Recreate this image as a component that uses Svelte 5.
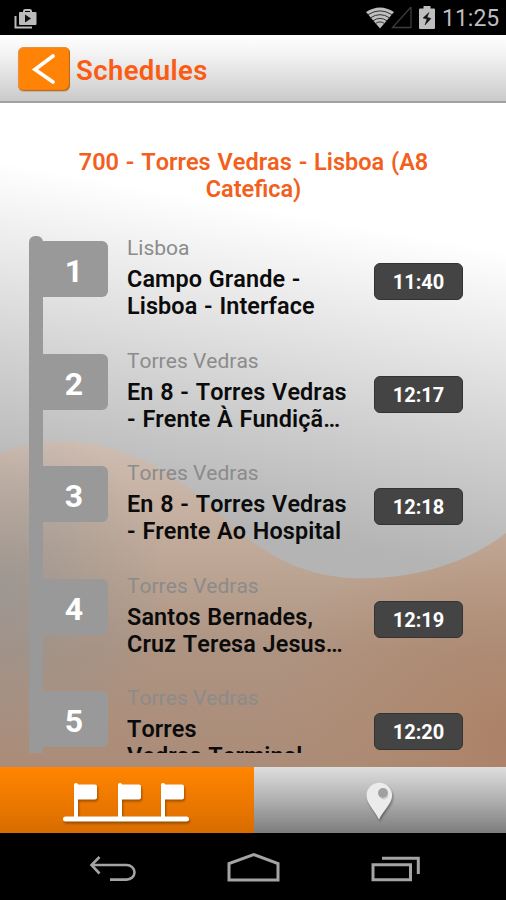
<script lang="ts">
  const stops = [
    { city: 'Lisboa', lines: ['Campo Grande -', 'Lisboa - Interface'], time: '11:40' },
    { city: 'Torres Vedras', lines: ['En 8 - Torres Vedras', '- Frente À Fundiçã…'], time: '12:17' },
    { city: 'Torres Vedras', lines: ['En 8 - Torres Vedras', '- Frente Ao Hospital'], time: '12:18' },
    { city: 'Torres Vedras', lines: ['Santos Bernades,', 'Cruz Teresa Jesus…'], time: '12:19' },
    { city: 'Torres Vedras', lines: ['Torres', 'Vedras Terminal'], time: '12:20' },
  ];
</script>

<div class="phone">
  <div class="status-bar">
    <svg class="store" width="24" height="22" viewBox="0 0 24 22">
      <path d="M1.5 8v11.5H18" fill="none" stroke="#bcbcbc" stroke-width="2" />
      <path d="M10 5V3.2Q10 2 11.2 2h4.6Q17 2 17 3.2V5" fill="none" stroke="#bcbcbc" stroke-width="2" />
      <rect x="5" y="4" width="17.5" height="13" rx="1" fill="#bcbcbc" />
      <path d="M11 6.5v8l6-4z" fill="#111" />
    </svg>
    <div class="status-icons">
      <svg width="28" height="22" viewBox="0 0 28 22">
        <path d="M0 5Q14-4 28 5L14 21.5z" fill="#bebebe" />
        <path d="M2 7.7Q14 0 26 7.7M4.5 10.8Q14 4.5 23.5 10.8M7 13.8Q14 9 21 13.8M9.5 16.5Q14 13.3 18.5 16.5" fill="none" stroke="#333" stroke-width="1" />
      </svg>
      <svg class="signal" width="21" height="22" viewBox="0 0 21 22">
        <path d="M1.5 20.5H20V0z" fill="none" stroke="#3c3c3c" stroke-width="1.3" />
      </svg>
      <svg class="battery" width="16" height="23" viewBox="0 0 16 23">
        <path d="M4.5 0h7v2.500H15q1 0 1 1V22q0 1-1 1H1q-1 0-1-1V3.500q0-1 1-1h3.500z" fill="#bebebe" />
        <path d="M10 6.5L4 12l4 1L6 19 12 12.500l-4-1.300z" fill="#111" stroke="#111" stroke-width=".5" />
      </svg>
      <span class="clock">11:25</span>
    </div>
  </div>

  <header class="app-bar">
    <button class="back" aria-label="Back">
      <svg width="52" height="44" viewBox="0 0 52 44">
        <path d="M35 9L17 22.5l18 12.5" fill="none" stroke="#fff" stroke-width="3.7" stroke-linecap="round" />
      </svg>
    </button>
    <h1>Schedules</h1>
  </header>

  <main>
    <svg class="backdrop" width="506" height="665" viewBox="0 102 506 665" preserveAspectRatio="none">
      <defs>
        <linearGradient id="sky" gradientUnits="userSpaceOnUse" x1="250" y1="205" x2="194" y2="519">
          <stop offset="0" stop-color="#fff" />
          <stop offset=".3" stop-color="#e8e8e8" />
          <stop offset=".62" stop-color="#cfcfcf" />
          <stop offset=".9" stop-color="#bbb" />
          <stop offset="1" stop-color="#b4b4b4" />
        </linearGradient>
        <linearGradient id="sand" gradientUnits="userSpaceOnUse" x1="0" y1="440" x2="0" y2="767">
          <stop offset="0" stop-color="#cfbdb2" />
          <stop offset=".35" stop-color="#bfa897" />
          <stop offset=".65" stop-color="#ad9381" />
          <stop offset="1" stop-color="#ab8c78" />
        </linearGradient>
        <radialGradient id="shade" gradientUnits="userSpaceOnUse" cx="0" cy="590" r="170">
          <stop offset="0" stop-color="#919191" stop-opacity=".7" />
          <stop offset="1" stop-color="#919191" stop-opacity="0" />
        </radialGradient>
        <radialGradient id="glow" gradientUnits="userSpaceOnUse" cx="506" cy="740" r="240">
          <stop offset="0" stop-color="#ac8064" stop-opacity=".85" />
          <stop offset="1" stop-color="#b48a6c" stop-opacity="0" />
        </radialGradient>
        <path id="wave" d="M0 453C25 441 58 438 88 443C153 453 198 492 242 534C282 565 319 578 363 578C420 578 467 562 506 533V767H0z" />
      </defs>
      <rect y="102" width="506" height="665" fill="url(#sky)" />
      <use href="#wave" fill="url(#sand)" />
      <use href="#wave" fill="url(#shade)" />
      <use href="#wave" fill="url(#glow)" />
    </svg>

    <h2>700 - Torres Vedras - Lisboa (A8<br />Catefica)</h2>

    <div class="list">
      <div class="rail"></div>
      <ol>
        {#each stops as stop, i}
          <li>
            <div class="flag">{i + 1}</div>
            <div class="info">
              <span class="city">{stop.city}</span>
              {#each stop.lines as line}
                <span class="name">{line}</span>
              {/each}
            </div>
            <div class="time">{stop.time}</div>
          </li>
        {/each}
      </ol>
    </div>
  </main>

  <nav class="tabs">
    <button class="tab active" aria-label="Stops">
      <svg width="128" height="42" viewBox="0 0 128 42">
        <path d="M2.5 40h121" stroke="#fff" stroke-width="5" stroke-linecap="round" />
        {#each [11, 55, 98] as x}
          <path d="M{x} 5q2-2 4 0v.5h17q2 0 2 2v11q0 2-2 2h-17v19h-4z" fill="#fff" />
        {/each}
      </svg>
    </button>
    <button class="tab" aria-label="Map">
      <svg width="28" height="38" viewBox="0 0 28 38">
        <path d="M13 38.500C9 30 .5 22.500 .5 14.500a12.800 12.800 0 0 1 25.600 0C26.100 22.500 17 30 13 38.500z" fill="#ebebeb" />
        <circle cx="17" cy="12" r="5" fill="#a0a0a0" />
        <path d="M13.500 15.500a5 5 0 0 0 8.500-3.500a4.500 4.500 0 0 1-8.500 3.500" fill="#c8c8c8" />
      </svg>
    </button>
  </nav>

  <div class="nav-bar">
    <svg width="506" height="67" viewBox="0 833 506 67" fill="none" stroke="#a4a4a4">
      <path d="M92 865h34.500a8 7.300 0 0 1 0 14.600H110" stroke-width="2.600" />
      <path d="M99.500 857L91.500 865l8 8.500" stroke-width="2.600" />
      <path d="M229 880v-16.500L253.700 854.500 278 863.500V880z" stroke-width="3" />
      <path d="M373 864.800h37.500v15H373z" stroke-width="3" />
      <path d="M382 858.300h36.300V874" stroke-width="3" />
    </svg>
  </div>
</div>

<style>
  :global(body) {
    margin: 0;
    background: #000;
  }

  .phone {
    display: flex;
    flex-direction: column;
    width: 506px;
    height: 900px;
    overflow: hidden;
    font-family: Roboto, 'Noto Sans', sans-serif;
    font-kerning: none;
  }

  button {
    border: 0;
    padding: 0;
  }

  .status-bar {
    display: flex;
    justify-content: space-between;
    height: 35px;
    box-sizing: border-box;
    padding: 7px 8px 0 14px;
    background: #000;
  }

  .store {
    margin-top: 1px;
  }

  .status-icons {
    display: flex;
    align-items: flex-start;
  }

  .signal {
    margin-left: -3px;
  }

  .battery {
    margin: -1px 0 0 7px;
  }

  .clock {
    margin: -2px 0 0 7px;
    width: 56px;
    color: #bebebe;
    font-size: 23px;
    line-height: 28px;
    white-space: nowrap;
  }

  .app-bar {
    display: flex;
    align-items: flex-start;
    height: 68px;
    box-sizing: border-box;
    padding: 12px 0 0 18px;
    background: linear-gradient(#fff, #f0f0f0 35%, #cacaca);
    border-bottom: 2px solid #a2a2a2;
    position: relative;
    z-index: 1;
  }

  .back {
    width: 52px;
    height: 44px;
    border-radius: 6px;
    background: #ff8307;
    box-shadow: inset -1px -1px 1px #b96a1c, inset 1px 1px 1px #e79445, 0 1px 1px #9998;
  }

  .back svg {
    display: block;
  }

  h1 {
    margin: 6px 0 0 6px;
    color: #fb5b13;
    font-size: 27.5px;
    font-weight: 600;
    line-height: 36px;
    letter-spacing: 0.4px;
  }

  main {
    position: relative;
    flex: 1;
    display: flex;
    flex-direction: column;
    min-height: 0;
  }

  .backdrop {
    position: absolute;
    inset: 0;
    width: 100%;
    height: 100%;
    z-index: -1;
  }

  h2 {
    margin: 46px 0 0;
    padding-left: 1px;
    text-align: center;
    color: #f2601c;
    font-size: 23.5px;
    font-weight: 600;
    line-height: 27px;
    word-spacing: 1px;
  }

  .list {
    display: flex;
    height: 517px;
    margin: 33px 0 0 29px;
    overflow: hidden;
  }

  .rail {
    width: 14px;
    height: 520px;
    flex-shrink: 0;
    border-radius: 6px 6px 0 0;
    background: #999;
  }

  ol {
    flex: 1;
    margin: 0;
    padding: 0;
    list-style: none;
  }

  li {
    display: flex;
    align-items: flex-start;
    height: 112.5px;
  }

  .flag {
    width: 65px;
    height: 56px;
    margin-top: 5px;
    padding-right: 3px;
    box-sizing: border-box;
    border-radius: 0 6px 6px 0;
    background: #999;
    color: #fff;
    font-size: 32px;
    font-weight: 700;
    line-height: 61px;
    text-align: center;
  }

  .info {
    display: flex;
    flex-direction: column;
    width: 247px;
    padding-left: 19px;
    box-sizing: border-box;
  }

  .city {
    margin-bottom: 5px;
    color: #8b8b8b;
    font-size: 21px;
    line-height: 25px;
  }

  .name {
    color: #0b0b0b;
    font-size: 23.4px;
    font-weight: 600;
    line-height: 27px;
    letter-spacing: 0.1px;
    word-spacing: 0.8px;
    white-space: nowrap;
  }

  .time {
    width: 89px;
    height: 37px;
    margin: 27px 0 0 19px;
    box-sizing: border-box;
    border: 1px solid #333;
    border-radius: 6px;
    background: #444;
    color: #fff;
    font-size: 20px;
    font-weight: 700;
    line-height: 37px;
    text-align: center;
  }

  .tabs {
    display: flex;
    height: 66px;
  }

  .tab {
    display: flex;
    align-items: center;
    justify-content: center;
    flex: 1;
    background: linear-gradient(#dedede, #b0b0b0 50%, #7d7d7d);
  }

  .tab.active {
    flex: 0 0 254px;
    background: linear-gradient(#ff8502, #ee7900 50%, #d86c00);
  }

  .tab svg {
    overflow: visible;
    filter: drop-shadow(1px 2px 1px #0005);
  }

  .nav-bar {
    height: 67px;
    background: #000;
  }

  .nav-bar svg {
    display: block;
  }
</style>
